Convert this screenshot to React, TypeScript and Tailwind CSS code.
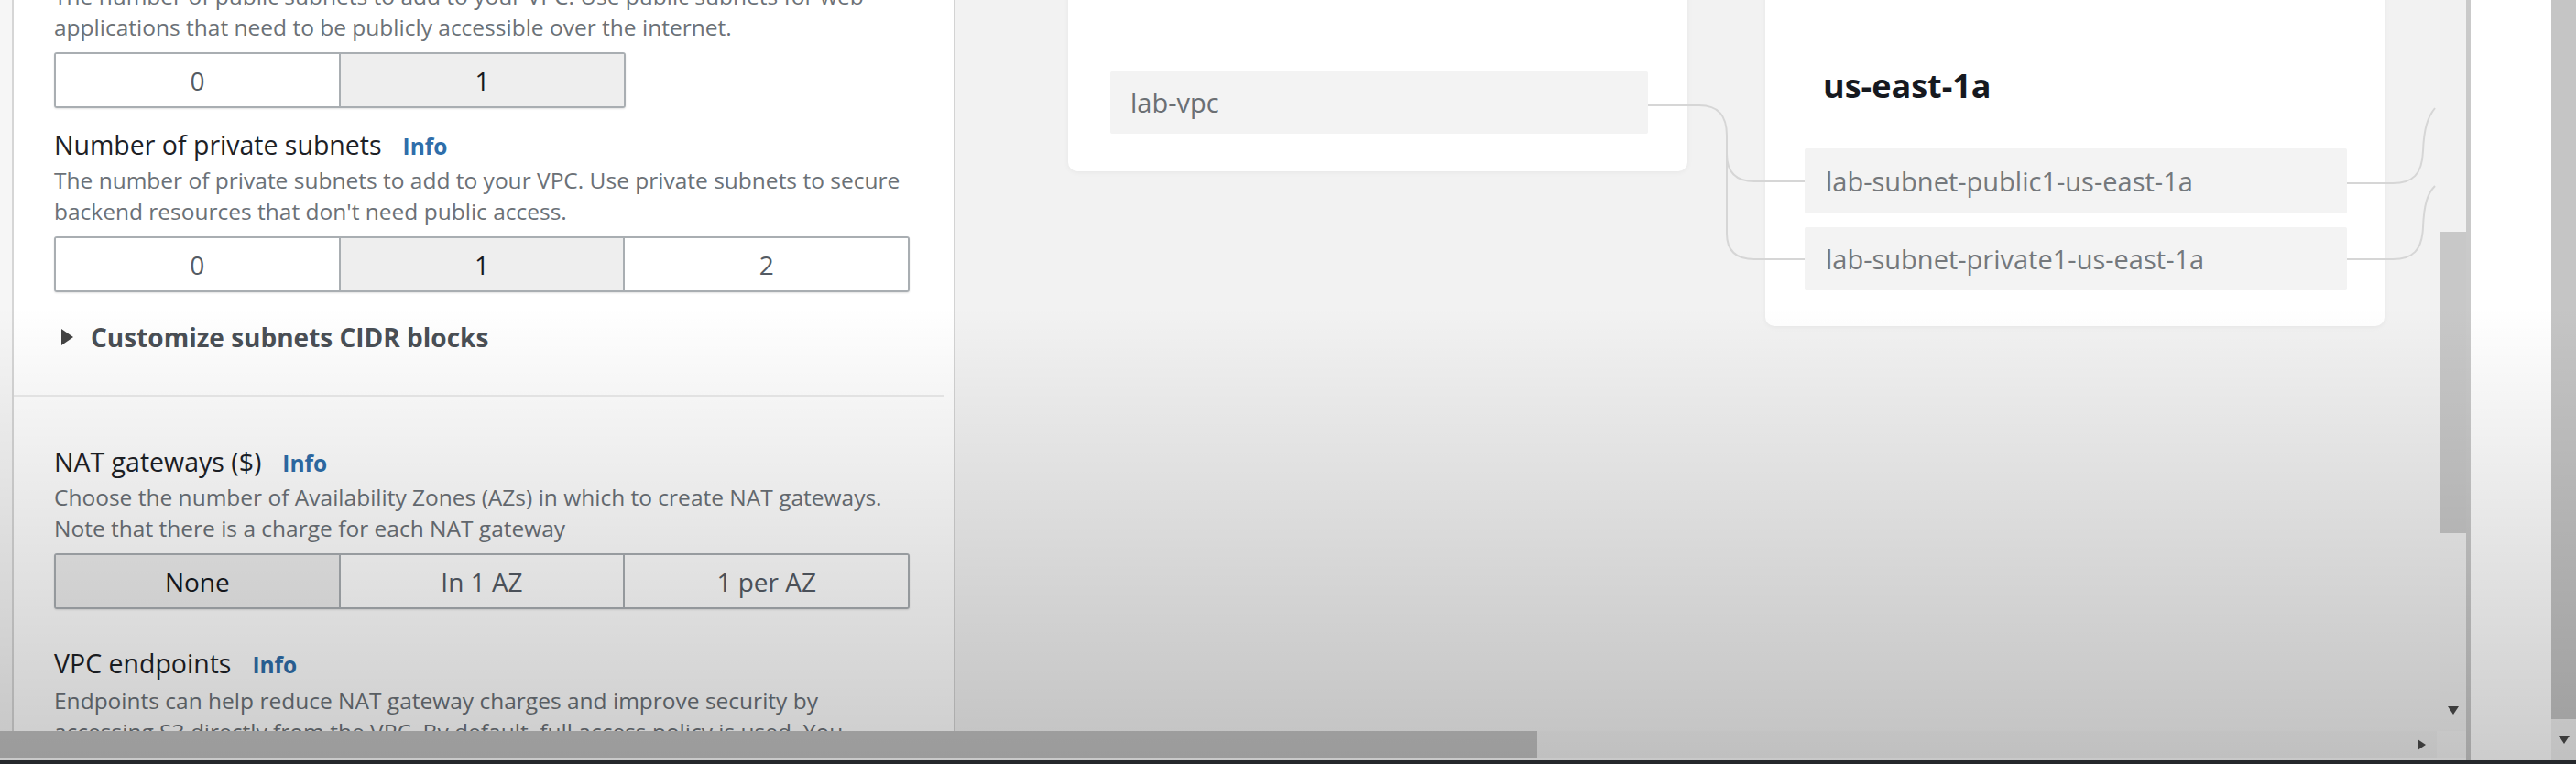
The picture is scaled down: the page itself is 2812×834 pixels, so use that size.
import React from "react";

const LABEL = "text-[28.5px] leading-[40px] text-[#1d2126]";
const DESC = "text-[24.5px] leading-[34px] text-[#6b7177] whitespace-nowrap";

function InfoLink() {
  return <span className="ml-[23px] text-[24.5px] font-bold text-[#2f6eaa]">Info</span>;
}

function Segmented({ options, selected, width }: { options: string[]; selected: number; width: string }) {
  return (
    <div className={`mt-[10px] flex h-[61px] overflow-hidden rounded-[3px] border-2 border-[#a9aeb2] shadow-[0_1px_2px_rgba(0,0,0,0.12)] ${width}`}>
      {options.map((o, i) => (
        <div
          key={o}
          className={`flex flex-1 items-center justify-center text-[28px] ${i > 0 ? "border-l-2 border-[#a9aeb2]" : ""} ${
            i === selected ? "bg-[#eeeeee] text-[#16191f]" : "bg-white text-[#545b64]"
          }`}
        >
          {o}
        </div>
      ))}
    </div>
  );
}

function LeftPane() {
  return (
    <div className="flex w-[1041px] shrink-0 overflow-hidden bg-[#f6f6f6] pl-[13px]">
      <div className="flex-1 border-l-2 border-[#d6d6d6] bg-white">
        <div className="-mt-[21px] pl-[44px]">
          {/* public subnets (label scrolled off) */}
          <p className={DESC}>
            The number of public subnets to add to your VPC. Use public subnets for web
            <br />
            applications that need to be publicly accessible over the internet.
          </p>
          <Segmented options={["0", "1"]} selected={1} width="w-[624px]" />

          {/* private subnets */}
          <div className={`mt-[20px] ${LABEL}`}>
            Number of private subnets
            <InfoLink />
          </div>
          <p className={DESC}>
            The number of private subnets to add to your VPC. Use private subnets to secure
            <br />
            backend resources that don't need public access.
          </p>
          <Segmented options={["0", "1", "2"]} selected={1} width="w-[934px]" />

          <div className="mt-[29px] flex h-[40px] items-center text-[28px] font-bold text-[#4a4f55]">
            <svg className="ml-[8px]" width="13" height="18" viewBox="0 0 13 18">
              <polygon points="0,0 13,9 0,18" fill="#444" />
            </svg>
            <span className="ml-[19px]">Customize subnets CIDR blocks</span>
          </div>
        </div>

        <div className="mr-[11px] mt-[43px] h-[2px] bg-[#ebebeb]" />

        <div className="pl-[44px]">
          <div className={`mt-[51px] ${LABEL}`}>
            NAT gateways ($)
            <InfoLink />
          </div>
          <p className={DESC}>
            Choose the number of Availability Zones (AZs) in which to create NAT gateways.
            <br />
            Note that there is a charge for each NAT gateway
          </p>
          <div className="mt-[2px]">
            <Segmented options={["None", "In 1 AZ", "1 per AZ"]} selected={0} width="w-[934px]" />
          </div>

          <div className={`mt-[39px] ${LABEL}`}>
            VPC endpoints
            <InfoLink />
          </div>
          <p className={`mt-[2px] ${DESC}`}>
            Endpoints can help reduce NAT gateway charges and improve security by
            <br />
            accessing S3 directly from the VPC. By default, full access policy is used. You
          </p>
        </div>
      </div>
    </div>
  );
}

function RightPane() {
  return (
    <div className="flex flex-1 items-start overflow-hidden border-l-2 border-[#d3d3d3] bg-[#f2f2f2] pl-[123px]">
      {/* VPC card */}
      <div className="-mt-[40px] h-[227px] w-[676px] shrink-0 rounded-[10px] bg-white pl-[46px] pt-[118px] shadow-[0_1px_6px_rgba(0,0,0,0.05)]">
        <div className="flex h-[68px] w-[587px] items-center rounded-[2px] bg-[#f3f3f3] pl-[22px] text-[29px] text-[#6b6f73]">
          lab-vpc
        </div>
      </div>

      {/* subnets card */}
      <div className="-mt-[40px] ml-[85px] h-[396px] w-[676px] shrink-0 rounded-[10px] bg-white pl-[43px] pt-[110px] shadow-[0_1px_6px_rgba(0,0,0,0.05)]">
        <div className="pl-[20px] text-[36px] font-bold leading-[48px] text-[#16191f]">us-east-1a</div>
        <div className="mt-[44px] flex h-[71px] w-[592px] items-center rounded-[2px] bg-[#f3f3f3] pl-[23px] text-[29px] text-[#74787c]">
          lab-subnet-public1-us-east-1a
        </div>
        <div className="mt-[15px] flex h-[69px] w-[592px] items-center rounded-[2px] bg-[#f3f3f3] pl-[23px] text-[29px] text-[#74787c]">
          lab-subnet-private1-us-east-1a
        </div>
      </div>
    </div>
  );
}

function DownArrow() {
  return (
    <svg width="12" height="9" viewBox="0 0 12 9">
      <polygon points="0,0 12,0 6,9" fill="#4a4a4a" />
    </svg>
  );
}

function InnerScrollbar() {
  return (
    <div className="flex w-[29px] shrink-0 flex-col items-center bg-[#f1f1f1]">
      <div className="mt-[253px] h-[329px] w-full bg-[#c8c8c8]" />
      <div className="flex-1" />
      <div className="mb-[18px]">
        <DownArrow />
      </div>
    </div>
  );
}

function HScrollbar() {
  return (
    <div className="flex h-[32px] flex-col">
      <div className="flex h-[29px]">
        <div className="w-[1678px] bg-[#c1c1c1]" />
        <div className="flex flex-1 items-center justify-end bg-[#efefef] pr-[12px]">
          <svg width="9" height="12" viewBox="0 0 9 12">
            <polygon points="0,0 9,6 0,12" fill="#4a4a4a" />
          </svg>
        </div>
        <div className="w-[32px] bg-[#f4f4f4]" />
      </div>
      <div className="h-[3px] bg-[#fafafa]" />
    </div>
  );
}

function OuterScrollbar() {
  return (
    <div className="flex w-[27px] shrink-0 flex-col">
      <div className="h-[785px] bg-[#c5c5c5]" />
      <div className="flex flex-1 items-center justify-center bg-[#f0f0f0]">
        <DownArrow />
      </div>
    </div>
  );
}

function Connectors() {
  return (
    <svg className="pointer-events-none absolute left-0 top-0" width="2812" height="834" fill="none">
      <g stroke="#d6d6d6" strokeWidth="2">
        <path d="M1799 115 H1855 C1876 115 1885 126 1885 148 V255 C1885 274 1895 283 1915 283 H1970" />
        <path d="M1885 168 C1885 188 1895 198 1915 198 H1970" />
        <path d="M2562 200 H2612 C2634 200 2644 190 2645 165 C2646 140 2650 128 2658 118" />
        <path d="M2562 283 H2612 C2634 283 2644 273 2645 248 C2646 223 2650 211 2658 203" />
      </g>
    </svg>
  );
}

export default function App() {
  return (
    <div className="relative h-[834px] w-[2812px] overflow-hidden bg-white font-['Open_Sans',sans-serif]">
      <div className="flex h-[830px]">
        <div className="flex w-[2692px] shrink-0 flex-col">
          <div className="flex h-[798px]">
            <LeftPane />
            <RightPane />
            <InnerScrollbar />
          </div>
          <HScrollbar />
        </div>
        <div className="w-[5px] shrink-0 bg-[#cacaca]" />
        <div className="w-[88px] shrink-0 bg-white" />
        <OuterScrollbar />
      </div>
      <div className="h-[4px] bg-[#2e3236]" />

      <Connectors />

      {/* video darkening towards the bottom */}
      <div className="pointer-events-none absolute inset-0 bg-linear-to-b from-transparent from-40% to-black/20" />
    </div>
  );
}
